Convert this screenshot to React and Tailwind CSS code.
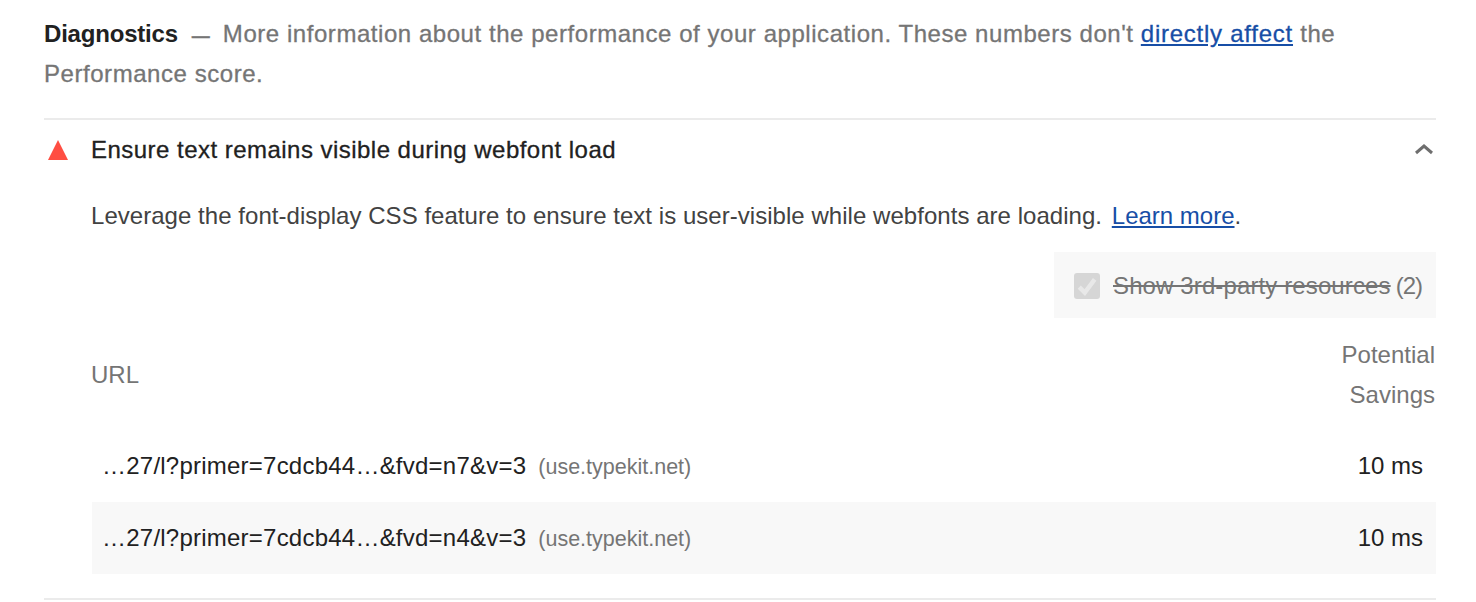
import React from "react";

const rows = [
  { url: "…27/l?primer=7cdcb44…&fvd=n7&v=3", striped: false },
  { url: "…27/l?primer=7cdcb44…&fvd=n4&v=3", striped: true },
];

const App = () => {
  return (
    <div className="min-h-screen bg-white pl-[44px] pr-[40px] pt-[14px] text-[24px] font-['Liberation_Sans',Arial,sans-serif] leading-[40px] text-[#212121] overflow-hidden">
      {/* Section header */}
      <div className="pb-[24px] text-[#757575] tracking-[0.55px] [-webkit-text-stroke:0.3px]">
        <span className="font-bold text-[#212121] tracking-[-0.2px] [-webkit-text-stroke:0px]">Diagnostics</span>
        <span className="ml-[14px] mr-[13px] text-[18px] leading-none font-bold tracking-normal">—</span>
        More information about the performance of your application. These numbers don't{" "}
        <a href="#" className="tracking-[0.75px] text-[#174ea6] underline">directly affect</a> the Performance score.
      </div>

      {/* Audit */}
      <div className="border-y-2 border-[#ebebeb] pb-[24px]">
        <div className="flex items-center h-[59px]">
          <svg width="20" height="20" viewBox="0 0 20 20" className="ml-[4px] mr-[23px]">
            <polygon points="10,0 20,20 0,20" fill="#ff4e42" />
          </svg>
          <div className="flex-1 tracking-[0.47px] [-webkit-text-stroke:0.3px]">
            Ensure text remains visible during webfont load
          </div>
          <svg width="20" height="12" viewBox="0 0 20 12" className="mr-[2px] -mt-[1px]">
            <path d="M2 10 L10 3 L18 10" fill="none" stroke="#6e6e6e" strokeWidth="3" />
          </svg>
        </div>

        <div className="pl-[48px]">
          <p className="-ml-[1px] pt-[17px] text-[#424242] tracking-[0.04px]">
            Leverage the font-display CSS feature to ensure text is user-visible while webfonts are loading.{" "}
            <a href="#" className="ml-[3px] tracking-normal text-[#174ea6] underline">Learn more</a>.
          </p>

          <div className="flex justify-end mt-[16px]">
            <label className="flex items-center w-[382px] h-[66px] pt-[2px] pl-[20px] pr-[14px] bg-[#f8f8f8] text-[#757575]">
              <span className="flex items-center justify-center w-[26px] h-[26px] mr-[13px] rounded-[3px] bg-[#d6d6d6]">
                <svg width="22" height="22" viewBox="0 0 20 20">
                  <path d="M3 11 L8 16 L17 4" fill="none" stroke="#e8e8e8" strokeWidth="4" />
                </svg>
              </span>
              <span className="line-through tracking-[0.12px]">Show 3rd-party resources</span>
              <span className="ml-auto tracking-[-1px]">(2)</span>
            </label>
          </div>

          {/* Table header */}
          <div className="flex items-center justify-between h-[111px] pt-[2px] pr-[1px] text-[#757575]">
            <div className="-ml-[1px]">URL</div>
            <div className="text-right w-[110px]">Potential Savings</div>
          </div>

          {/* Table rows */}
          <div className="pt-[1px]">
            {rows.map((row) => (
              <div
                key={row.url}
                className={`flex items-center justify-between h-[72px] pl-[10px] pr-[13px] ${row.striped ? "bg-[#f8f8f8]" : ""}`}
              >
                <div className="tracking-[0.23px]">
                  {row.url}
                  <span className="ml-[12px] text-[21.5px] tracking-normal text-[#757575]">(use.typekit.net)</span>
                </div>
                <div>10 ms</div>
              </div>
            ))}
          </div>
        </div>
      </div>
    </div>
  );
};

export default App;
